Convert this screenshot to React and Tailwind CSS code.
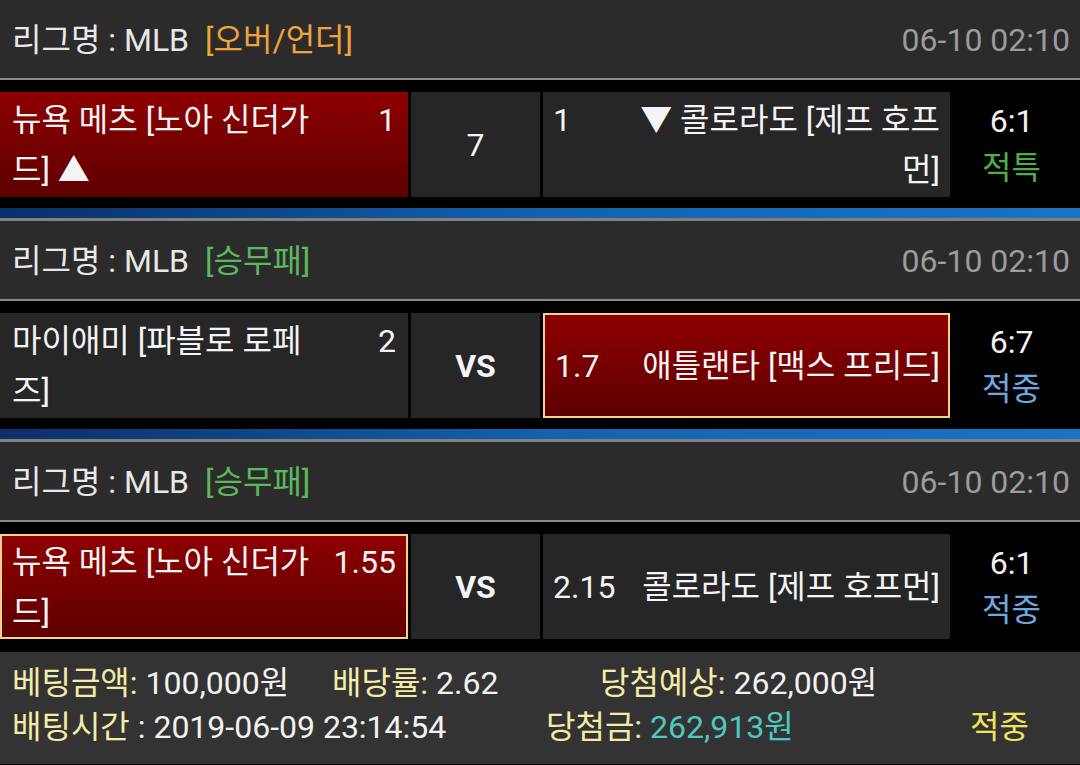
import React from "react";

const FONT = "font-['Roboto','Noto_Sans_CJK_KR',sans-serif]";

function Header({ type, typeColor }) {
  return (
    <div className="h-[80px] bg-[#2b2b2b] border-b-2 border-[#8a8a8a] flex items-center justify-between pl-[12px] pr-[10px] pt-[2px] text-[32px]">
      <div className="text-[#e8e8e8] whitespace-nowrap">
        리그명 : MLB<span className={"ml-[16px] " + typeColor}>{type}</span>
      </div>
      <div className="text-[#9c9c9c]">06-10 02:10</div>
    </div>
  );
}

function LeftCell({ name, odds, variant }) {
  const cls =
    variant === "sel"
      ? "bg-gradient-to-b from-[#8e0000] to-[#5e0000] border-2 border-[#f3d28e] pl-[10px] pr-[10px]"
      : variant === "red"
      ? "bg-gradient-to-b from-[#8e0000] to-[#5e0000] pl-[12px] pr-[12px]"
      : "bg-[#262626] pl-[12px] pr-[12px]";
  return (
    <div className={"w-[408px] shrink-0 flex items-center " + cls}>
      <div className="flex w-full items-start justify-between leading-[50px]">
        <div className="w-[304px]">{name}</div>
        <div>{odds}</div>
      </div>
    </div>
  );
}

function RightCell({ name, odds, variant }) {
  const cls =
    variant === "sel"
      ? "bg-gradient-to-b from-[#8e0000] to-[#5e0000] border-2 border-[#f3d28e] pl-[10px] pr-[8px]"
      : "bg-[#262626] pl-[10px] pr-[10px]";
  return (
    <div className={"w-[407px] shrink-0 flex items-center " + cls}>
      <div className="flex w-full items-start justify-between leading-[50px]">
        <div>{odds}</div>
        <div className="w-[304px] text-right">{name}</div>
      </div>
    </div>
  );
}

function Score({ score, result, color }) {
  return (
    <div className="flex-1 flex flex-col items-center justify-center pr-[10px] pt-[1px] leading-[47px]">
      <div className="text-[#f2f2f2]">{score}</div>
      <div className={color}>{result}</div>
    </div>
  );
}

function Group({ header, left, mid, midBold, right, score, last }) {
  return (
    <div>
      {header}
      <div className={"bg-black pt-[12px] flex gap-[3px] text-[32px] text-[#f4f4f4] " + (last ? "pb-[13px]" : "pb-[11px]")}>
        <div className="h-[105px] flex gap-[3px]">
          {left}
          <div className={"w-[129px] shrink-0 bg-[#262626] flex items-center justify-center " + (midBold ? "font-bold" : "")}>
            {mid}
          </div>
          {right}
        </div>
        {score}
      </div>
      {!last && (
        <>
          <div className="h-[10px] bg-gradient-to-r from-[#0b2f69] via-[#1262ae] to-[#1a74c4]"></div>
          <div className="h-[3px] bg-[#808080]"></div>
        </>
      )}
    </div>
  );
}

export default function App() {
  return (
    <div className={"w-[1080px] h-[765px] bg-black overflow-hidden " + FONT}>
      <Group
        header={<Header type="[오버/언더]" typeColor="text-[#f0a23c]" />}
        left={<LeftCell name="뉴욕 메츠 [노아 신더가드] ▲" odds="1" variant="red" />}
        mid="7"
        right={<RightCell name="▼ 콜로라도 [제프 호프먼]" odds="1" />}
        score={<Score score="6:1" result="적특" color="text-[#4fae4a]" />}
      />
      <Group
        header={<Header type="[승무패]" typeColor="text-[#5cb85c]" />}
        left={<LeftCell name="마이애미 [파블로 로페즈]" odds="2" />}
        mid="VS"
        midBold
        right={<RightCell name="애틀랜타 [맥스 프리드]" odds="1.7" variant="sel" />}
        score={<Score score="6:7" result="적중" color="text-[#6fa8e0]" />}
      />
      <Group
        header={<Header type="[승무패]" typeColor="text-[#5cb85c]" />}
        left={<LeftCell name="뉴욕 메츠 [노아 신더가드]" odds="1.55" variant="sel" />}
        mid="VS"
        midBold
        right={<RightCell name="콜로라도 [제프 호프먼]" odds="2.15" />}
        score={<Score score="6:1" result="적중" color="text-[#6fa8e0]" />}
        last
      />
      <div className="h-[112px] bg-[#333333] pt-[9px] text-[32px] leading-[44px] text-[#f2f2f2]">
        <div className="flex pl-[12px] whitespace-nowrap">
          <div className="w-[320px]">
            <span className="text-[#f3eca8]">베팅금액:</span> 100,000원
          </div>
          <div className="w-[268px]">
            <span className="text-[#f3eca8]">배당률:</span> 2.62
          </div>
          <div>
            <span className="text-[#f3eca8]">당첨예상:</span> 262,000원
          </div>
        </div>
        <div className="flex pl-[12px] whitespace-nowrap">
          <div className="w-[534px]">
            <span className="text-[#f3eca8]">배팅시간</span> : 2019-06-09 23:14:54
          </div>
          <div className="w-[424px]">
            <span className="text-[#f3eca8]">당첨금:</span> <span className="text-[#4ec9c0]">262,913원</span>
          </div>
          <div className="text-[#f2e15c]">적중</div>
        </div>
      </div>
    </div>
  );
}
